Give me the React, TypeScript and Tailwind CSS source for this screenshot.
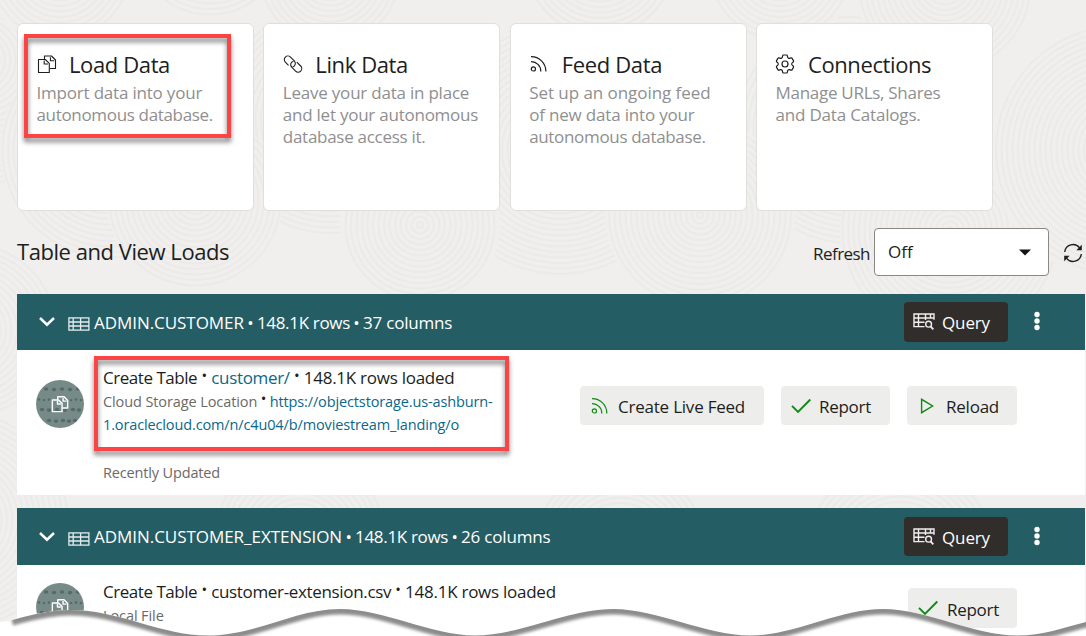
import type { ReactNode } from "react";
import { HiOutlineCog6Tooth } from "react-icons/hi2";

function CopyIcon({ className, stroke = 1.1 }: { className: string; stroke?: number }) {
  return (
    <svg viewBox="0 0 20 20" className={className} fill="none" stroke="currentColor" strokeWidth={stroke} strokeLinejoin="round">
      <path d="M1.5 5.5H8.3L12.3 9.3V18.5H1.5Z" />
      <path d="M7.2 6.5V10H11" />
      <path d="M7.5 5.3V2H14.5L18.5 6V14.5H12.8" />
      <path d="M13.4 3.2V6.8H17.2" />
    </svg>
  );
}

function LinkIcon() {
  return (
    <svg viewBox="0 0 20 20" className="size-5" fill="none" stroke="currentColor" strokeWidth="1.1">
      <path d="M8.6 10.9H4.1A3.6 3.6 0 0 1 4.1 3.7H9.6A3.6 3.6 0 0 1 12.6 9.2" transform="rotate(45 6.6 7.4)" />
      <path d="M10.4 9.1H15.9A3.6 3.6 0 0 1 15.9 16.3H10.4A3.6 3.6 0 0 1 7.4 10.8" transform="rotate(45 13.3 12.7)" />
    </svg>
  );
}

function FeedIcon({ className }: { className: string }) {
  return (
    <svg viewBox="0 0 18 18" className={className} fill="none" stroke="currentColor" strokeWidth="1.2">
      <circle cx="3.4" cy="13.9" r="2.1" />
      <path d="M1 6.7A9.5 9.5 0 0 1 10.8 16.4" />
      <path d="M1 1.6A14.8 14.8 0 0 1 15.9 16.4" />
    </svg>
  );
}

function TableIcon() {
  return (
    <svg viewBox="0 0 22 14" className="h-[14px] w-[22px]" fill="none" stroke="#e4eced" strokeWidth="1.3">
      <rect x="0.9" y="0.9" width="20" height="12.2" />
      <path d="M5.2 1V13M12.6 1V13M1 5H21M1 9H21" />
    </svg>
  );
}

function QueryIcon() {
  return (
    <svg viewBox="0 0 22 18" className="h-[18px] w-[22px]" fill="none" stroke="#f1efed" strokeWidth="1.4">
      <path d="M11.5 13.6H1V1H21V6.8" />
      <path d="M1 5H21M1 9.3H11.5M5.5 1V13.6M12.5 1V7M17.5 1V5" />
      <circle cx="15.6" cy="11.2" r="2.9" />
      <path d="M17.6 13.4L20.3 16.4" strokeWidth="1.8" />
    </svg>
  );
}

function RefreshIcon() {
  return (
    <svg viewBox="0 0 20 20" className="size-5" fill="none" stroke="#201e1c" strokeWidth="1.4">
      <path d="M1.7 9A8.3 8.3 0 0 1 16.6 4.9" />
      <path d="M18.3 11A8.3 8.3 0 0 1 3.4 15.1" />
      <path d="M18.8 1.8V7.2H13.4Z" fill="#201e1c" stroke="none" />
      <path d="M1.2 18.2V12.8H6.6Z" fill="#201e1c" stroke="none" />
    </svg>
  );
}

function CheckIcon() {
  return (
    <svg viewBox="0 0 20 16" className="h-4 w-5" fill="none" stroke="#0f8a12" strokeWidth="1.9">
      <path d="M1 7.8L7 13.8L19.3 1.5" />
    </svg>
  );
}

function PlayIcon() {
  return (
    <svg viewBox="0 0 14 16" className="h-4 w-[14px]" fill="none" stroke="#0f8a12" strokeWidth="1.4">
      <path d="M1.6 1.3V14.7L12.6 8Z" />
    </svg>
  );
}

const ripples: [number, number, number][] = [
  [-20, 60, 130], [110, 150, 110], [330, 120, 120], [560, 150, 130], [850, 130, 120],
  [195, 200, 88], [420, 225, 80], [700, 215, 95], [950, 230, 110], [60, -30, 75],
  [330, -25, 75], [210, -60, 80], [600, -40, 80], [780, -30, 75], [945, -15, 90],
  [1120, 150, 130], [-30, 330, 90], [-40, 520, 110], [300, 540, 90], [620, 550, 90], [900, 560, 100],
];

function Backdrop() {
  return (
    <svg className="absolute inset-0" width="1086" height="636">
      <rect width="1086" height="636" fill="#f0efed" />
      {ripples.map(([x, y, r], i) => (
        <g key={i} stroke="#ebeae8" strokeWidth="2" fill="none">
          <circle cx={x} cy={y} r={r} fill="#f0efed" stroke="none" />
          {Array.from({ length: Math.floor(r / 5.5) }, (_, k) => (
            <circle key={k} cx={x} cy={y} r={k * 5.5 + 3} />
          ))}
        </g>
      ))}
    </svg>
  );
}

function Highlight({ className }: { className: string }) {
  return (
    <div
      className={
        "absolute border-4 border-[#fc4444] [filter:drop-shadow(0_4px_2.5px_rgba(0,0,0,0.5))] " + className
      }
    />
  );
}

function ActionCard({ icon, title, titleClass, lines, children }: {
  icon: ReactNode;
  title: string;
  titleClass: string;
  lines: [string, string][];
  children?: ReactNode;
}) {
  return (
    <div className="relative rounded-md border border-[#e0dfdd] bg-white pt-[26px] pl-[19px]">
      <div className="flex h-7 items-center text-[#201e1c]">
        <div className="flex w-8 shrink-0">{icon}</div>
        <h3 className={"text-[22px] leading-7 whitespace-nowrap " + titleClass}>{title}</h3>
      </div>
      <div className="mt-1 -ml-[0.5px] text-[17px] leading-[22px] whitespace-nowrap text-[#8f8f8f]">
        {lines.map(([text, tracking]) => (
          <p key={text} className={tracking}>{text}</p>
        ))}
      </div>
      {children}
    </div>
  );
}

function Dot() {
  return <span className="inline-block w-[13px] text-center tracking-normal">•</span>;
}

function RaisedDot({ className = "w-[14px]" }: { className?: string }) {
  return <span className={"relative -top-[3px] inline-block text-center text-[15px] leading-none tracking-normal text-[#201e1c] " + className}>•</span>;
}

function LoadBar({ name, columns, nameClass, className, textClass, buttonClass }: {
  name: string;
  columns: string;
  nameClass: string;
  className: string;
  textClass: string;
  buttonClass: string;
}) {
  return (
    <div className={"flex items-center bg-[#255d64] pl-[21px] text-[17px] text-white " + className}>
      <svg viewBox="0 0 18 12" className="mr-3 h-3 w-[18px]" fill="none" stroke="white" strokeWidth="2.5">
        <path d="M2 2L9 8.7L16 2" />
      </svg>
      <div className="mt-[4px]"><TableIcon /></div>
      <div className={"ml-[4px] flex whitespace-nowrap " + textClass}>
        <span className={nameClass}>{name}</span>
        <Dot />
        <span className="tracking-[-0.33px]">148.1K rows</span>
        <Dot />
        <span className="tracking-[-0.2px]">{columns}</span>
      </div>
      <button className={"ml-auto flex w-[104px] items-center rounded bg-[#312d2a] pl-[9px] " + buttonClass}>
        <QueryIcon />
        <span className="mt-[2px] ml-[7px] tracking-[-0.13px]">Query</span>
      </button>
      <svg viewBox="0 0 6 20" className="mr-[45px] mb-[2px] ml-[26px] h-5 w-[6px]" fill="white">
        <circle cx="3" cy="3.5" r="2.7" />
        <circle cx="3" cy="10" r="2.7" />
        <circle cx="3" cy="16.5" r="2.7" />
      </svg>
    </div>
  );
}

const speckles: [number, number[]][] = [
  [9, [10, 18, 26, 34, 42]],
  [19.5, [3, 8, 13, 35, 40, 45]],
  [29.5, [6, 13, 21, 29, 37, 43]],
  [40.5, [13, 20, 27, 33, 39]],
];

function Avatar() {
  return (
    <div className="relative flex size-12 shrink-0 items-center justify-center overflow-hidden rounded-full bg-[#768a88] text-white">
      <svg viewBox="0 0 48 48" className="absolute inset-0 size-12" fill="#566a68">
        {speckles.map(([y, xs], row) =>
          xs.map((x, i) => <ellipse key={`${y}-${x}`} cx={x} cy={y + (i % 2) * 0.6} rx={row === 1 ? 1.3 : 2.2} ry={row === 1 ? 1.2 : 1.8} />)
        )}
      </svg>
      <CopyIcon className="relative size-[18px]" stroke={1.6} />
    </div>
  );
}

function ActionButton({ icon, label, className, labelClass }: { icon: ReactNode; label: string; className: string; labelClass: string }) {
  return (
    <button className={"flex items-center rounded bg-[#ededeb] text-[17px] whitespace-nowrap text-[#201e1c] " + className}>
      {icon}
      <span className={labelClass}>{label}</span>
    </button>
  );
}

const crest =
  "C25 617 45 610 70 610C120 610 160 635.5 208 635.5S295 609 340 609S430 635.5 475 635.5S568 609 613 609S705 635.5 750 635.5S838 609 883 609S972 635.5 1017 635.5C1045 635.5 1065 627 1090 621";

function TornEdge() {
  return (
    <svg className="absolute bottom-0 left-0" width="1086" height="36" viewBox="0 600 1086 36">
      <defs>
        <clipPath id="paper">
          <path d={"M0 622L8 621" + crest + "V640H0Z"} />
        </clipPath>
        <filter id="soft" x="-5%" y="-100%" width="110%" height="300%">
          <feGaussianBlur stdDeviation="1.8" />
        </filter>
      </defs>
      <path d={"M0 622L8 621" + crest + "V640H0Z"} fill="white" />
      <g clipPath="url(#paper)">
        <path d={"M12 620" + crest} transform="translate(0 1)" fill="none" stroke="#8c8c8c" strokeWidth="9" filter="url(#soft)" />
      </g>
    </svg>
  );
}

export default function App() {
  return (
    <div className="relative h-[636px] w-[1086px] overflow-hidden bg-[#f0efed] font-['Open_Sans',sans-serif] text-[#201e1c]">
      <Backdrop />
      <div className="relative flex flex-col pt-[23px] pr-px pl-[17px]">
        <section className="grid h-[188px] w-[976px] grid-cols-[237px_237px_237px_237px] justify-between">
          <ActionCard
            icon={<CopyIcon className="size-5" />}
            title="Load Data"
            titleClass="tracking-[-0.38px]"
            lines={[["Import data into your", "tracking-[-0.2px]"], ["autonomous database.", "tracking-[-0.33px]"]]}
          >
            <Highlight className="top-[10px] left-[6px] h-[104px] w-[207px]" />
          </ActionCard>
          <ActionCard
            icon={<LinkIcon />}
            title="Link Data"
            titleClass="tracking-[-0.4px]"
            lines={[
              ["Leave your data in place", "tracking-[-0.22px]"],
              ["and let your autonomous", "tracking-[-0.24px]"],
              ["database access it.", "tracking-[-0.28px]"],
            ]}
          />
          <ActionCard
            icon={<FeedIcon className="size-[18px]" />}
            title="Feed Data"
            titleClass="tracking-[-0.34px]"
            lines={[
              ["Set up an ongoing feed", "tracking-[-0.05px]"],
              ["of new data into your", "tracking-[-0.18px]"],
              ["autonomous database.", "tracking-[-0.33px]"],
            ]}
          />
          <ActionCard
            icon={<HiOutlineCog6Tooth className="-ml-[3px] size-6 [&>path]:[stroke-width:1.2]" />}
            title="Connections"
            titleClass="tracking-[-0.4px]"
            lines={[["Manage URLs, Shares", "tracking-[-0.28px]"], ["and Data Catalogs.", "tracking-[-0.18px]"]]}
          />
        </section>

        <header className="flex h-[83px] items-start pt-[17px]">
          <h2 className="mt-[9px] text-[22px] leading-7 tracking-[-0.45px]">Table and View Loads</h2>
          <label className="mt-[14px] ml-auto text-[17px] leading-6 tracking-[-0.54px]">Refresh</label>
          <div className="ml-[4px] flex h-12 w-[175px] items-center justify-between rounded border border-[#8a8785] bg-white pr-[17px] pl-[13px] text-[17px]">
            <span>Off</span>
            <svg viewBox="0 0 12 7" className="h-[7px] w-3" fill="#161513"><path d="M0 0.5H12L6 6.5Z" /></svg>
          </div>
          <button className="mt-[15px] mr-[2px] ml-[14px]"><RefreshIcon /></button>
        </header>

        <LoadBar name="ADMIN.CUSTOMER" columns="37 columns" nameClass="tracking-[-0.05px]" className="h-14" textClass="mt-[2px]" buttonClass="h-10" />
        <div className="relative flex h-[145px] bg-white">
          <div className="pt-[30px] pl-[19px]"><Avatar /></div>
          <div className="ml-[19px] flex-1 pt-4 whitespace-nowrap">
            <div className="text-[17px] leading-6">
              <span className="tracking-[-0.46px]">Create Table</span>
              <RaisedDot />
              <a className="tracking-[-0.32px] text-[#09688b]">customer/</a>
              <RaisedDot />
              <span className="tracking-[-0.26px]">148.1K rows loaded</span>
            </div>
            <div className="text-[14.5px] leading-[23px] text-[#6b6967]">
              <span className="tracking-[-0.1px]">Cloud Storage Location</span>
              <RaisedDot className="w-[12.5px]" />
              <a className="tracking-[-0.13px] text-[#09688b]">https://objectstorage.us-ashburn-</a>
              <br />
              <a className="tracking-[-0.13px] text-[#09688b]">1.oraclecloud.com/n/c4u04/b/moviestream_landing/o</a>
            </div>
            <p className="mt-[25px] text-[14.5px] leading-[23px] tracking-[-0.15px] text-[#6b6967]">Recently Updated</p>
          </div>
          <div className="flex gap-[17px] pt-9 pr-[68px]">
            <ActionButton icon={<FeedIcon className="size-[18px] text-[#0f8a12]" />} label="Create Live Feed" className="h-[39px] w-[184px] pl-[11px]" labelClass="mt-[2px] ml-[9px] tracking-[-0.22px]" />
            <ActionButton icon={<CheckIcon />} label="Report" className="h-[39px] w-[109px] pl-[10px]" labelClass="mt-[2px] ml-[8px] tracking-[-0.28px]" />
            <ActionButton icon={<PlayIcon />} label="Reload" className="h-[39px] w-[110px] pl-[13px]" labelClass="mt-[2px] ml-[12px] tracking-[-0.23px]" />
          </div>
          <Highlight className="top-[6px] left-[77px] h-[95px] w-[415px]" />
        </div>

        <LoadBar name="ADMIN.CUSTOMER_EXTENSION" columns="26 columns" nameClass="tracking-[-0.04px]" className="mt-[13px] h-[57px]" textClass="mt-0" buttonClass="h-[39px]" />
        <div className="flex h-[80px] bg-white">
          <div className="pt-[18px] pl-[19px]"><Avatar /></div>
          <div className="ml-[19px] flex-1 pt-[15px] whitespace-nowrap">
            <div className="text-[17px] leading-6">
              <span className="tracking-[-0.46px]">Create Table</span>
              <RaisedDot />
              <span className="tracking-[-0.34px]">customer-extension.csv</span>
              <RaisedDot />
              <span className="tracking-[-0.26px]">148.1K rows loaded</span>
            </div>
            <p className="text-[14.5px] leading-[23px] tracking-[-0.1px] text-[#6b6967]">Local File</p>
          </div>
          <div className="pt-[23px] pr-[68px]">
            <ActionButton icon={<CheckIcon />} label="Report" className="h-10 w-[109px] pl-[10px]" labelClass="mt-[3px] ml-[9px] tracking-[-0.28px]" />
          </div>
        </div>
      </div>
      <TornEdge />
    </div>
  );
}
